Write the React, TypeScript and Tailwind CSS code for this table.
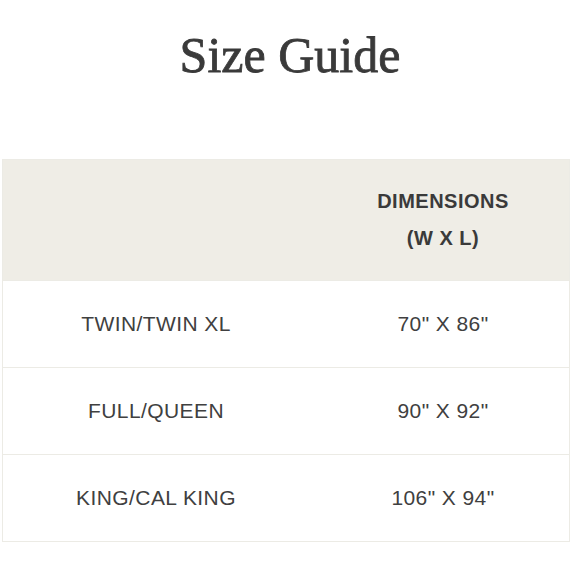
import React from 'react';

type Row = {
  size: string;
  dims: string;
};

const rows: Row[] = [
  { size: 'TWIN/TWIN XL', dims: '70" X 86"' },
  { size: 'FULL/QUEEN', dims: '90" X 92"' },
  { size: 'KING/CAL KING', dims: '106" X 94"' },
];

export default function App() {
  return (
    <div className="w-[580px] h-[580px] bg-white text-[#404040] font-['Liberation_Sans',Arial,sans-serif]">
      <h1 className="pt-[30px] text-center text-[50px] leading-[50px] font-['Liberation_Serif','Times_New_Roman',serif] text-[#3a3a3a] [-webkit-text-stroke:0.8px_#3a3a3a]">
        Size Guide
      </h1>

      <div className="mt-[79px] ml-[2px] w-[568px] border border-[#ecebe5]">
        {/* cabeçalho */}
        <div className="grid grid-cols-[306px_1fr] h-[120px] bg-[#efede6]">
          <div />
          <div className="flex flex-col items-center justify-center text-[20px] leading-[37px] font-bold tracking-[0.025em] text-[#3a3a3a] pl-[8px]">
            <span>DIMENSIONS</span>
            <span>(W X L)</span>
          </div>
        </div>

        {rows.map((row, i) => (
          <div
            key={i}
            className="grid grid-cols-[306px_1fr] h-[87px] items-center border-t border-[#ecebe5] text-[21px] tracking-[0.02em]"
          >
            <div className="text-center">{row.size}</div>
            <div className="text-center pl-[8px]">{row.dims}</div>
          </div>
        ))}
      </div>
    </div>
  );
}
